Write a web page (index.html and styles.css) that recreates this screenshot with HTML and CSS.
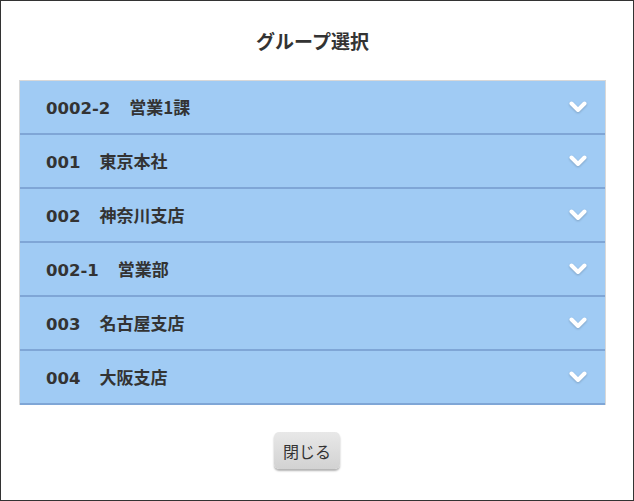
FILE: index.html
```html
<!DOCTYPE html>
<html lang="ja">
<head>
  <meta charset="UTF-8">
  <meta name="viewport" content="width=device-width, initial-scale=1.0">
  <title>グループ選択</title>
  <link rel="stylesheet" href="styles.css">
</head>
<body>
  <div class="dialog">
    <h1>グループ選択</h1>
    <ul class="group-list">
      <li class="group-item"><span class="label"><span class="code">0002-2</span>営業1課</span><svg class="chevron" viewBox="0 0 18 12"><path d="M2.5 2.5 L9 9 L15.5 2.5"/></svg></li>
      <li class="group-item"><span class="label"><span class="code">001</span>東京本社</span><svg class="chevron" viewBox="0 0 18 12"><path d="M2.5 2.5 L9 9 L15.5 2.5"/></svg></li>
      <li class="group-item"><span class="label"><span class="code">002</span>神奈川支店</span><svg class="chevron" viewBox="0 0 18 12"><path d="M2.5 2.5 L9 9 L15.5 2.5"/></svg></li>
      <li class="group-item"><span class="label"><span class="code">002-1</span>営業部</span><svg class="chevron" viewBox="0 0 18 12"><path d="M2.5 2.5 L9 9 L15.5 2.5"/></svg></li>
      <li class="group-item"><span class="label"><span class="code">003</span>名古屋支店</span><svg class="chevron" viewBox="0 0 18 12"><path d="M2.5 2.5 L9 9 L15.5 2.5"/></svg></li>
      <li class="group-item"><span class="label"><span class="code">004</span>大阪支店</span><svg class="chevron" viewBox="0 0 18 12"><path d="M2.5 2.5 L9 9 L15.5 2.5"/></svg></li>
    </ul>
    <div class="actions">
      <button class="close-btn">閉じる</button>
    </div>
  </div>
</body>
</html>
```

FILE: styles.css
```css
html, body {
  margin: 0;
  padding: 0;
  background: #ffffff;
}
body {
  font-family: "Noto Sans CJK JP", "DejaVu Sans", sans-serif;
  color: #333333;
}
.dialog {
  box-sizing: border-box;
  width: 634px;
  height: 501px;
  border: 1px solid #333333;
  padding: 0 27px 0 18px;
}
h1 {
  margin: 0;
  padding-top: 25px;
  height: 54px;
  box-sizing: border-box;
  font-size: 19px;
  line-height: 30px;
  font-weight: bold;
  text-align: center;
}
.group-list {
  list-style: none;
  margin: 0;
  padding: 0;
  border: 1px solid #d8d8d8;
  border-bottom: none;
  margin-top: 25px;
}
.group-item {
  display: flex;
  align-items: center;
  height: 52px;
  padding: 0 18px 0 26px;
  background: #a0cbf4;
  border-bottom: 2px solid #7fa6d6;
  font-size: 17px;
  font-weight: bold;
}
.label {
  flex: 1;
  line-height: 20px;
  padding-top: 2px;
}
.label .code {
  font-family: "DejaVu Sans", sans-serif;
  font-size: 16.5px;
  margin-right: 19px;
}
.chevron {
  width: 18px;
  height: 12px;
  fill: none;
  stroke: #ffffff;
  stroke-width: 4;
  stroke-linecap: round;
  stroke-linejoin: round;
  filter: drop-shadow(0 1px 1px rgba(0, 0, 0, 0.2));
}
.actions {
  display: flex;
  justify-content: center;
  padding: 27px 11px 0 0;
}
.close-btn {
  font-family: "Noto Sans CJK JP", "DejaVu Sans", sans-serif;
  font-size: 16px;
  color: #333333;
  width: 66px;
  height: 37px;
  border: none;
  border-radius: 5px;
  background: linear-gradient(#e8e8e8, #d2d2d2);
  box-shadow: 0 2px 2px rgba(0, 0, 0, 0.3);
  cursor: pointer;
}
```
